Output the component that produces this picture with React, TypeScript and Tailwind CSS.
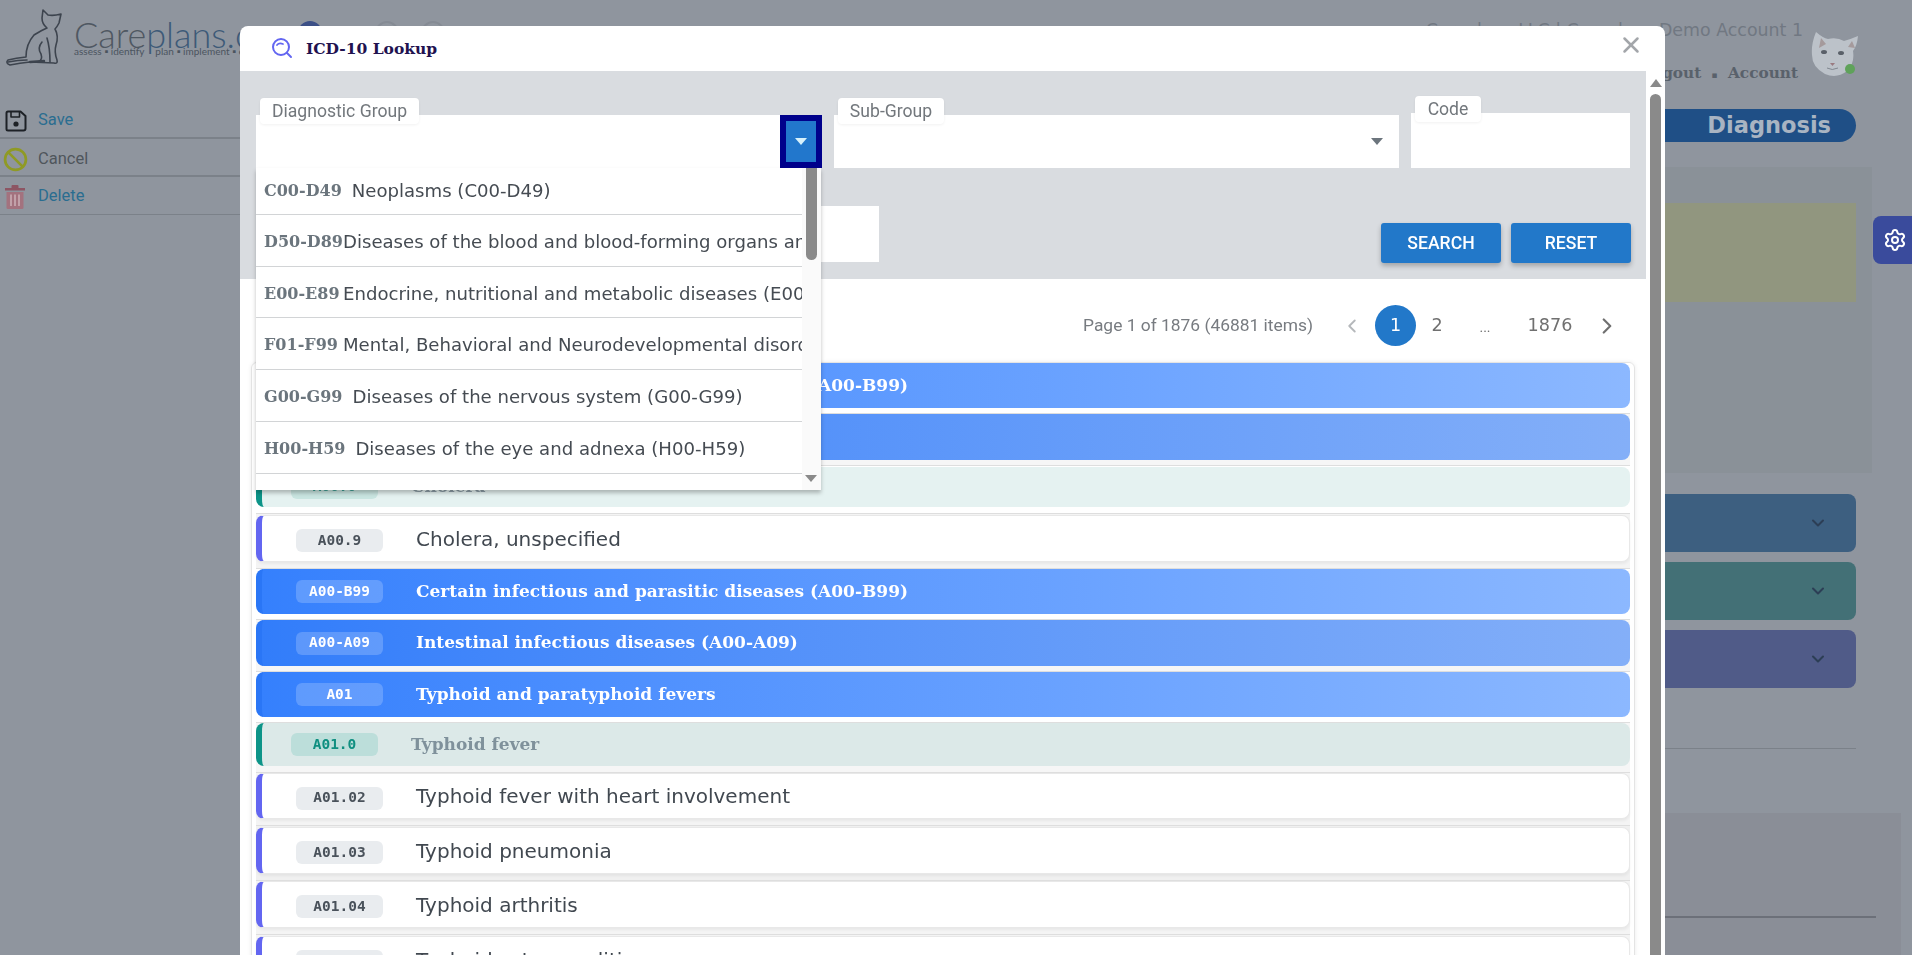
import { Ban, ChevronDown, ChevronLeft, ChevronRight, Settings, X } from "lucide-react";

type RowKind = "blue" | "blue2" | "teal" | "tealSoft" | "white";

type ListRow = {
  code: string;
  text: string;
  kind: RowKind;
  wrap: string;
  height: string;
};

const kindStyles: Record<RowKind, { row: string; pill: string; label: string }> = {
  blue: {
    row: "rounded-lg border-l-[6px] border-[#2a76f6] bg-gradient-to-r from-[#3580fd] to-[#8cb8ff] pl-[34px]",
    pill: "bg-white/20 text-white",
    label: "font-['DejaVu_Serif'] text-[17px] font-bold text-white",
  },
  blue2: {
    row: "rounded-lg border-l-[6px] border-[#2a76f6] bg-gradient-to-r from-[#327dfa] to-[#84aff8] pl-[34px]",
    pill: "bg-white/20 text-white",
    label: "font-['DejaVu_Serif'] text-[17px] font-bold text-white",
  },
  teal: {
    row: "rounded-lg border-l-[6px] border-[#0d9488] bg-[#dce9e8] pl-[29px]",
    pill: "bg-[#bcdeda] text-[#0f8f80]",
    label: "font-['DejaVu_Serif'] text-[17px] font-bold text-[#7f919b]",
  },
  tealSoft: {
    row: "rounded-lg border-l-[6px] border-[#0d9488] bg-[#e5f2f1] pl-[29px]",
    pill: "bg-[#c9e5e1] text-[#3d9f93]",
    label: "font-['DejaVu_Serif'] text-[17px] font-bold text-[#8d9ea7]",
  },
  white: {
    row: "rounded-lg border border-l-[6px] border-[#e8e8e8] border-l-[#6366f1] bg-white pl-[34px] shadow-[0_2px_3px_rgba(0,0,0,0.05)]",
    pill: "mt-[4px] bg-[#e9ecef] text-[#4a525b]",
    label: "font-['DejaVu_Sans'] text-[20px] text-[#414850]",
  },
};

const rows: ListRow[] = [
  { code: "A00-B99", text: "Certain infectious and parasitic diseases (A00-B99)", kind: "blue", wrap: "h-[51px] bg-white", height: "h-[45px]" },
  { code: "A00-A09", text: "Intestinal infectious diseases (A00-A09)", kind: "blue2", wrap: "h-[52px] bg-[#f6f6f6]", height: "h-[46px]" },
  { code: "A00.0", text: "Cholera", kind: "tealSoft", wrap: "h-[48px] pt-px bg-white", height: "h-[40px]" },
  { code: "A00.9", text: "Cholera, unspecified", kind: "white", wrap: "h-[55px] pt-px bg-[#f4f4f4]", height: "h-[47px]" },
  { code: "A00-B99", text: "Certain infectious and parasitic diseases (A00-B99)", kind: "blue", wrap: "h-[51px] bg-white", height: "h-[45px]" },
  { code: "A00-A09", text: "Intestinal infectious diseases (A00-A09)", kind: "blue2", wrap: "h-[52px] bg-[#f6f6f6]", height: "h-[46px]" },
  { code: "A01", text: "Typhoid and paratyphoid fevers", kind: "blue", wrap: "h-[51px] bg-white", height: "h-[45px]" },
  { code: "A01.0", text: "Typhoid fever", kind: "teal", wrap: "h-[50px] bg-[#f6f6f6]", height: "h-[43px]" },
  { code: "A01.02", text: "Typhoid fever with heart involvement", kind: "white", wrap: "h-[53px] bg-[#f4f4f4]", height: "h-[46px]" },
  { code: "A01.03", text: "Typhoid pneumonia", kind: "white", wrap: "h-[55px] pt-px bg-[#f0f0f0]", height: "h-[47px]" },
  { code: "A01.04", text: "Typhoid arthritis", kind: "white", wrap: "h-[54px] bg-[#f4f4f4]", height: "h-[47px]" },
  { code: "A01.05", text: "Typhoid osteomyelitis", kind: "white", wrap: "h-[54px] pt-px bg-[#f4f4f4]", height: "h-[47px]" },
];

const groups = [
  { code: "C00-D49", text: "Neoplasms (C00-D49)", fixed: false, height: "h-[47px]" },
  { code: "D50-D89", text: "Diseases of the blood and blood-forming organs and certain disorders", fixed: true, height: "h-[52px] pt-[3px]" },
  { code: "E00-E89", text: "Endocrine, nutritional and metabolic diseases (E00-E89)", fixed: true, height: "h-[51px] pt-[3px]" },
  { code: "F01-F99", text: "Mental, Behavioral and Neurodevelopmental disorders (F01-F99)", fixed: true, height: "h-[52px] pt-[3px]" },
  { code: "G00-G99", text: "Diseases of the nervous system (G00-G99)", fixed: false, height: "h-[52px] pt-[3px]" },
  { code: "H00-H59", text: "Diseases of the eye and adnexa (H00-H59)", fixed: false, height: "h-[52px] pt-[3px]" },
];

const CatLogo = () => (
  <svg className="shrink-0" width="66" height="66" viewBox="0 0 66 66" fill="none" stroke="#3d444e" strokeWidth="1.6" strokeLinejoin="round" strokeLinecap="round">
    <path d="M43 10 L48 15 Q54 16 61 14 L59 23 Q57 27 55 29 Q59 36 56 45 Q54 52 57 60 Q58 64 54 63 L30 62 Q20 63 10 65 Q5 63 8 60 Q16 58 26 57 Q26 44 34 35 Q42 30 47 28 Q42 24 42 18 Z" />
    <path d="M47 38 Q50 48 50 62" />
    <path d="M42 42 Q37 48 41 54 Q43 60 38 62" />
    <path d="M8 62 Q18 60 27 60" />
    <path d="M30 62 L44 61" strokeWidth="2.4" />
  </svg>
);

const CatAvatar = () => (
  <svg width="48" height="48" viewBox="0 0 48 48">
    <path d="M5 2 Q12 8 17 9 Q26 7 33 11 Q40 9 47 6 Q46 16 42 21 Q44 33 36 41 Q26 49 14 44 Q1 37 1 25 Q0 14 5 2 Z" fill="#bcc2c9" />
    <path d="M10 8 L15 14 L8 18 Z" fill="#a59a9c" />
    <path d="M41 11 L37 17 L44 18 Z" fill="#a59a9c" />
    <ellipse cx="13" cy="22" rx="3" ry="2" fill="#5a6069" />
    <ellipse cx="30" cy="23" rx="3" ry="2" fill="#5a6069" />
    <path d="M19 33 L24 33 L21.5 36 Z" fill="#9a7a80" />
    <path d="M16 38 Q21 41 27 38" fill="none" stroke="#808790" strokeWidth="1" />
  </svg>
);

const SaveIcon = () => (
  <svg className="shrink-0" width="22" height="22" viewBox="0 0 22 22" fill="none" stroke="#1d2126" strokeWidth="2" strokeLinejoin="round">
    <path d="M3 1.5 H15.5 L20.5 6 V18.5 Q20.5 20.5 18.5 20.5 H3 Q1.5 20.5 1.5 19 V3 Q1.5 1.5 3 1.5 Z" />
    <path d="M6 1.5 V7 H14.5 V1.5" strokeWidth="1.6" />
    <circle cx="11" cy="14" r="2.6" fill="#1d2126" stroke="none" />
  </svg>
);

const TrashIcon = () => (
  <svg className="shrink-0" width="22" height="26" viewBox="0 0 22 26">
    <path d="M1 4 H7.5 V2 Q7.5 1 8.5 1 H13.5 Q14.5 1 14.5 2 V4 H21 V6.5 H1 Z" fill="#8d5563" />
    <path d="M2.5 8 H19.5 V23.5 Q19.5 25 18 25 H4 Q2.5 25 2.5 23.5 Z" fill="#a3727e" />
    <path d="M7 10.5 V22 M11 10.5 V22 M15 10.5 V22" stroke="#c2a1a9" strokeWidth="2" />
  </svg>
);

const LookupIcon = () => (
  <svg width="22" height="22" viewBox="0 0 22 22" fill="none" stroke="#6366f1" strokeWidth="2" strokeLinecap="round">
    <circle cx="10" cy="10" r="8" />
    <path d="M6 8 Q8 5.5 12 7" strokeWidth="1.8" />
    <path d="M16 16 L20 20" />
  </svg>
);

const Caret = ({ color }: { color: string }) => (
  <svg width="12" height="7" viewBox="0 0 12 7">
    <path d="M0 0 H12 L6 7 Z" fill={color} />
  </svg>
);

const FieldTag = ({ label, wide }: { label: string; wide: string }) => (
  <div className={`absolute -top-[17px] left-[4px] z-20 flex h-[26px] items-center justify-center rounded-[4px] bg-white font-['Roboto'] text-[17.6px] text-[#72777c] shadow-[0_1px_3px_rgba(0,0,0,0.06)] ${wide}`}>
    {label}
  </div>
);

const GroupDropdown = () => (
  <div className="absolute left-0 top-[53px] z-10 flex h-[322px] w-[565px] bg-white shadow-[0_3px_4px_rgba(0,0,0,0.25)]">
    <ul className="w-[546px] overflow-hidden">
      {groups.map((g) => (
        <li key={g.code} className={`flex items-center overflow-hidden whitespace-nowrap border-b border-[#d2d4d6] pl-[8px] ${g.height}`}>
          <span className={`shrink-0 font-['DejaVu_Serif'] text-[16px] font-bold text-[#6b757d] ${g.fixed ? "w-[79px]" : "mr-[10px]"}`}>{g.code}</span>
          <span className="font-['DejaVu_Sans'] text-[18.1px] text-[#454b52]">{g.text}</span>
        </li>
      ))}
    </ul>
    <div className="flex flex-1 flex-col items-center justify-between bg-[#fafafa] pb-[8px] pr-[1px]">
      <div className="h-[92px] w-[11px] rounded-b-md bg-[#8a8a8a]" />
      <Caret color="#8a8a8a" />
    </div>
  </div>
);

const LookupRow = ({ row }: { row: ListRow }) => {
  const s = kindStyles[row.kind];
  return (
    <li className={`border-b border-[#dedede] ${row.wrap}`}>
      <div className={`flex items-center ${row.height} ${s.row}`}>
        <span className={`flex h-[23px] w-[87px] shrink-0 items-center justify-center rounded-md font-['DejaVu_Sans_Mono'] text-[14.5px] font-bold ${s.pill}`}>
          {row.code}
        </span>
        <span className={`ml-[33px] whitespace-nowrap ${s.label}`}>{row.text}</span>
      </div>
    </li>
  );
};

const LookupModal = () => (
  <div className="fixed left-[240px] top-[26px] z-30 flex h-[929px] w-[1425px] flex-col overflow-hidden rounded-t-lg bg-white">
    <div className="flex h-[45px] shrink-0 items-center justify-between pl-[31px] pr-[21px]">
      <div className="flex items-center gap-[13px]">
        <span className="-mt-[1px]"><LookupIcon /></span>
        <span className="font-['DejaVu_Serif'] text-[15.5px] font-bold text-[#21124f]">ICD-10 Lookup</span>
      </div>
      <X size={26} strokeWidth={2.3} className="mb-[7px] text-[#a3a6aa]" />
    </div>

    <div className="flex min-h-0 flex-1">
      <div className="w-[1406px]">
        <div className="h-[208px] bg-[#d9dce0] px-[16px] pt-[42px]">
          <div className="flex items-end gap-[12px]">
            <div className="relative flex h-[53px] w-[566px] justify-end bg-white">
              <FieldTag label="Diagnostic Group" wide="w-[159px]" />
              <div className="flex h-[53px] w-[42px] items-center justify-center border-[6px] border-[#00008b] bg-[#2277cc]">
                <Caret color="#d7f1fb" />
              </div>
              <GroupDropdown />
            </div>
            <div className="relative flex h-[53px] w-[565px] items-center justify-end bg-white pr-[16px]">
              <FieldTag label="Sub-Group" wide="w-[106px]" />
              <Caret color="#6c757d" />
            </div>
            <div className="relative h-[55px] w-[219px] bg-white">
              <FieldTag label="Code" wide="w-[66px]" />
            </div>
          </div>
          <div className="mt-[38px] flex items-end justify-between">
            <div className="mb-[1px] h-[56px] w-[623px] bg-white" />
            <div className="-mr-px flex gap-[10px] font-['Roboto'] text-[17.6px] font-medium text-white">
              <button className="h-[40px] w-[120px] rounded-[3px] bg-[#2278c9] shadow-[0_3px_5px_rgba(0,0,0,0.25)]">SEARCH</button>
              <button className="h-[40px] w-[120px] rounded-[3px] bg-[#2278c9] shadow-[0_3px_5px_rgba(0,0,0,0.25)]">RESET</button>
            </div>
          </div>
        </div>

        <div className="flex h-[83px] items-start justify-end pr-[24px] pt-[26px] font-['DejaVu_Sans'] text-[17.6px] text-[#707070]">
          <span className="mr-[24px] flex h-[41px] items-center font-['Roboto'] text-[17.4px] text-[#777b80]">Page 1 of 1876 (46881 items)</span>
          <span className="flex h-[41px] w-[30px] items-center justify-center text-[#b5b8bb]"><ChevronLeft size={22} /></span>
          <span className="ml-[8px] flex h-[41px] w-[41px] items-center justify-center rounded-full bg-[#2278c9] text-white">1</span>
          <span className="flex h-[41px] w-[42px] items-center justify-center">2</span>
          <span className="ml-[5px] flex h-[41px] w-[44px] items-center justify-center pt-[4px] font-['Roboto'] text-[14px]">...</span>
          <span className="ml-[14px] flex h-[41px] w-[58px] items-center justify-center">1876</span>
          <span className="ml-[13px] flex h-[41px] w-[30px] items-center justify-center"><ChevronRight size={26} /></span>
        </div>

        <ul className="mx-[11px] rounded-t-md border border-[#e4e4e4] px-[4px] shadow-[0_0_4px_rgba(0,0,0,0.08)]">
          {rows.map((row, i) => (
            <LookupRow key={i} row={row} />
          ))}
        </ul>
      </div>

      <div className="flex flex-1 flex-col items-center pt-[8px]">
        <svg width="12" height="8" viewBox="0 0 12 8"><path d="M6 0 L12 8 H0 Z" fill="#8a8a8a" /></svg>
        <div className="mt-[7px] w-[11px] flex-1 rounded-t-md bg-[#8a8a8a]" />
      </div>
    </div>
  </div>
);

const Sidebar = () => (
  <div className="w-[240px] shrink-0">
    <div className="flex h-[100px] items-start whitespace-nowrap">
      <CatLogo />
      <div className="ml-[8px] mt-[15px] font-['Lato']">
        <div className="text-[36px] font-light leading-[38px] text-[#4f5862]">
          Care<span className="text-[#3d5a78]">plans.com</span>
        </div>
        <div className="-mt-[9px] text-[10px] text-[#4b545e]">
          assess ▪ identify<span className="ml-[11px]">plan ▪ implement ▪ evaluate</span>
        </div>
      </div>
    </div>
    <div className="font-['Roboto'] text-[16.5px]">
      <div className="flex h-[39px] items-center gap-[11px] border-b-2 border-[#7b8189] pl-[5px] pt-[4px] text-[#2a6d90]">
        <SaveIcon /> Save
      </div>
      <div className="flex h-[38px] items-center gap-[10px] border-b-2 border-[#7b8189] pl-[3px] pt-[4px] text-[#4f565c]">
        <Ban size={25} strokeWidth={2.6} className="shrink-0 text-[#8f9a25]" /> Cancel
      </div>
      <div className="flex h-[38px] items-center gap-[12px] border-b border-[#7b8189] pl-[4px] pt-[2px] text-[#2a6d90]">
        <TrashIcon /> Delete
      </div>
    </div>
  </div>
);

const Accordion = ({ color }: { color: string }) => (
  <div className={`mr-[56px] flex h-[58px] items-center justify-end rounded-lg pr-[28px] text-[#2c3e55] ${color}`}>
    <ChevronDown size={20} strokeWidth={2.4} />
  </div>
);

const RightPane = () => (
  <div className="w-[490px] shrink-0 overflow-hidden">
    <div className="mr-[23px] flex h-[88px] justify-end">
      <div className="whitespace-nowrap pt-[17px] text-right">
        <div className="font-['DejaVu_Sans'] text-[17.4px] text-[#717882]">Careplans LLC | Careplans Demo Account 1</div>
        <div className="mr-[5px] mt-[19px] font-['DejaVu_Serif'] text-[15.3px] font-bold text-[#59616b]">
          Logout <span className="mx-[5px] text-[9px]">▪</span> Account
        </div>
      </div>
      <div className="relative ml-[8px] mr-[30px] mt-[30px] h-[48px] w-[48px]">
        <CatAvatar />
        <span className="absolute bottom-[4px] right-[4px] h-[10px] w-[10px] rounded-full bg-[#5fa25a]" />
      </div>
    </div>
    <div className="mr-[56px] mt-[21px] flex h-[33px] items-center justify-end rounded-full bg-[#1f4f86] pr-[25px] font-['DejaVu_Sans'] text-[22.5px] font-bold text-[#a9b4c2]">
      Diagnosis
    </div>
    <div className="mr-[40px] mt-[25px] h-[306px] bg-[#8a9198] pr-[16px] pt-[36px]">
      <div className="h-[99px] bg-[#91967f]" />
    </div>
    <div className="mt-[21px] flex flex-col gap-[10px]">
      <Accordion color="bg-[#3d5f80]" />
      <Accordion color="bg-[#437076]" />
      <Accordion color="bg-[#505b88]" />
    </div>
    <div className="mr-[56px] mt-[60px] h-px bg-[#7b8189]" />
    <div className="mr-[11px] mt-[64px] h-[200px] bg-[#8a8e97] pr-[25px] pt-[103px]">
      <div className="h-[2px] bg-[#6c7079]" />
    </div>
  </div>
);

export default function App() {
  return (
    <div className="relative flex h-screen w-full overflow-hidden bg-[#8f959e]">
      <Sidebar />
      <div className="flex flex-1 gap-[53px] pl-[58px] pt-[21px]">
        <span className="h-[24px] w-[24px] rounded-full bg-[#3c4f86]" />
        <span className="h-[24px] w-[24px] rounded-full border-2 border-[#858b94]" />
        <span className="-ml-[31px] h-[24px] w-[24px] rounded-full border-2 border-[#858b94]" />
      </div>
      <RightPane />

      <div className="absolute right-0 top-[216px] flex h-[48px] w-[39px] items-center justify-center rounded-l-lg bg-[#3a4b9c] pl-[5px] text-white">
        <Settings size={24} />
      </div>

      <LookupModal />
    </div>
  );
}
